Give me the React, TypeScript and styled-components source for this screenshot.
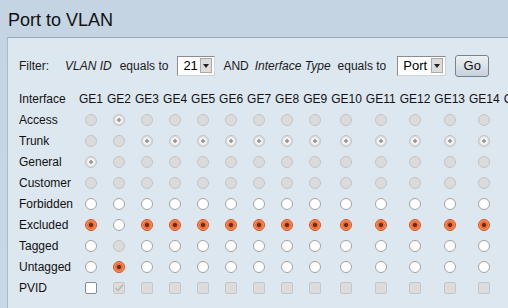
import styled, { createGlobalStyle, css } from 'styled-components';

const GlobalStyle = createGlobalStyle`
    html, body {
        margin: 0;
        padding: 0;
        width: 508px;
        height: 308px;
        overflow: hidden;
        background: #c6d6e5;
        font-family: 'Liberation Sans', Arial, sans-serif;
        color: #1a1a1a;
    }
`;

const Page = styled.div`
    width: 508px;
    height: 308px;
    box-sizing: border-box;
    padding: 9px 0 0 7px;
    background: linear-gradient(#c4d4e3, #c8d8e7);
    overflow: hidden;
`;

const Title = styled.h1`
    margin: 0 0 6px 1px;
    font-size: 18px;
    font-weight: normal;
    line-height: 22px;
    color: #111;
`;

const Panel = styled.div`
    width: 560px;
    height: 280px;
    box-sizing: border-box;
    padding: 17px 0 0 11px;
    background: #dde7f0;
    border-top: 1px solid #97a8b8;
    border-left: 1px solid #a9bacb;
`;

const FilterRow = styled.div`
    display: flex;
    align-items: center;
    height: 21px;
    font-size: 12px;
    white-space: nowrap;
`;

const Word = styled.span<{ $italic?: boolean; $gap: number }>`
    font-style: ${(p) => (p.$italic ? 'italic' : 'normal')};
    margin-right: ${(p) => p.$gap}px;
`;

const Select = styled.div<{ $width: number; $gap: number }>`
    display: flex;
    align-items: center;
    justify-content: space-between;
    box-sizing: border-box;
    width: ${(p) => p.$width}px;
    height: 20px;
    margin-right: ${(p) => p.$gap}px;
    padding: 0 2px 0 5px;
    background: #fff;
    border: 1px solid #8c8c8c;
    border-right-color: #d4d4d4;
    border-bottom-color: #d4d4d4;
    font-size: 13px;
    color: #000;
`;

const Arrow = styled.span`
    display: flex;
    align-items: center;
    justify-content: center;
    width: 12px;
    height: 15px;
    background: #dcdcdc;
    border: 1px solid #aaa;
    box-sizing: border-box;
    &::after {
        content: '';
        border-left: 3px solid transparent;
        border-right: 3px solid transparent;
        border-top: 4px solid #222;
    }
`;

const GoButton = styled.button`
    width: 34px;
    height: 22px;
    padding: 0;
    border: 1px solid #75838f;
    border-radius: 3px;
    background: linear-gradient(#edf1f5, #c6d1dc);
    font-family: inherit;
    font-size: 13px;
    color: #111;
`;

const Grid = styled.table`
    margin-top: 12px;
    border-collapse: collapse;
    font-size: 12px;
`;

const Cell = styled.td<{ $label?: boolean }>`
    height: 21px;
    padding: ${(p) => (p.$label ? '0' : '0 2px')};
    text-align: ${(p) => (p.$label ? 'left' : 'center')};
    width: ${(p) => (p.$label ? '58px' : 'auto')};
    min-width: ${(p) => (p.$label ? '58px' : '0')};
    max-width: ${(p) => (p.$label ? '58px' : 'none')};
    vertical-align: middle;
    white-space: nowrap;
    color: #111;
`;

const HeadCell = styled(Cell).attrs({ as: 'th' })`
    font-weight: normal;
`;

type Mark = 'off' | 'on' | 'doff' | 'don';

const Radio = styled.span<{ $mark: Mark }>`
    display: inline-block;
    box-sizing: border-box;
    width: 12px;
    height: 12px;
    border-radius: 50%;
    vertical-align: middle;
    ${(p) =>
        p.$mark === 'off' &&
        css`
            background: #fff;
            border: 1px solid #a3a3a3;
        `}
    ${(p) =>
        (p.$mark === 'doff' || p.$mark === 'don') &&
        css`
            background: #dbdbdb;
            border: 1px solid #c4c4c4;
        `}
    ${(p) =>
        p.$mark === 'don' &&
        css`
            background: radial-gradient(circle, #9a9a9a 0 1.5px, #f2f2f2 2px 3.5px, #dedede 4px);
        `}
    ${(p) =>
        p.$mark === 'on' &&
        css`
            background: radial-gradient(circle, #6e2a12 0 1.8px, #ec6a32 2.3px 3.5px, #f4915f 4px);
            border: 1px solid #c9572a;
        `}
`;

const Box = styled.span<{ $mark: Mark }>`
    display: inline-flex;
    align-items: center;
    justify-content: center;
    box-sizing: border-box;
    width: 12px;
    height: 12px;
    border-radius: 2px;
    vertical-align: middle;
    background: ${(p) => (p.$mark === 'off' ? '#fff' : '#dcdcdc')};
    border: 1px solid ${(p) => (p.$mark === 'off' ? '#8a8a8a' : '#c6c6c6')};
`;

const ports = Array.from({ length: 15 }, (_, i) => `GE${i + 1}`);

const rows: { name: string; kind: 'radio' | 'box'; marks: Mark[] }[] = [
    { name: 'Access', kind: 'radio', marks: ports.map((_, i) => (i === 1 ? 'don' : 'doff')) },
    { name: 'Trunk', kind: 'radio', marks: ports.map((_, i) => (i >= 2 ? 'don' : 'doff')) },
    { name: 'General', kind: 'radio', marks: ports.map((_, i) => (i === 0 ? 'don' : 'doff')) },
    { name: 'Customer', kind: 'radio', marks: ports.map(() => 'doff') },
    { name: 'Forbidden', kind: 'radio', marks: ports.map(() => 'off') },
    { name: 'Excluded', kind: 'radio', marks: ports.map((_, i) => (i === 1 ? 'off' : 'on')) },
    { name: 'Tagged', kind: 'radio', marks: ports.map((_, i) => (i === 1 ? 'doff' : 'off')) },
    { name: 'Untagged', kind: 'radio', marks: ports.map((_, i) => (i === 1 ? 'on' : 'off')) },
    { name: 'PVID', kind: 'box', marks: ports.map((_, i) => (i === 0 ? 'off' : i === 1 ? 'don' : 'doff')) },
];

const Check = () => (
    <svg width='10' height='10' viewBox='0 0 10 10'>
        <path d='M1.5 5 L4 7.5 L9 1.5' fill='none' stroke='#b8b8b8' strokeWidth='1.6' />
    </svg>
);

const App = () => (
    <Page>
        <GlobalStyle />
        <Title>Port to VLAN</Title>
        <Panel>
            <FilterRow>
                <Word $gap={16}>Filter:</Word>
                <Word $italic $gap={8}>
                    VLAN ID
                </Word>
                <Word $gap={9}>equals to</Word>
                <Select $width={38} $gap={8}>
                    21
                    <Arrow />
                </Select>
                <Word $gap={6}>AND</Word>
                <Word $italic $gap={7}>
                    Interface Type
                </Word>
                <Word $gap={11}>equals to</Word>
                <Select $width={49} $gap={9}>
                    Port
                    <Arrow />
                </Select>
                <GoButton>Go</GoButton>
            </FilterRow>
            <Grid>
                <thead>
                    <tr>
                        <HeadCell $label>Interface</HeadCell>
                        {ports.map((p) => (
                            <HeadCell key={p}>{p}</HeadCell>
                        ))}
                    </tr>
                </thead>
                <tbody>
                    {rows.map((r) => (
                        <tr key={r.name}>
                            <Cell $label>{r.name}</Cell>
                            {r.marks.map((m, i) => (
                                <Cell key={i}>
                                    {r.kind === 'radio' ? (
                                        <Radio $mark={m} />
                                    ) : (
                                        <Box $mark={m}>{m === 'don' && <Check />}</Box>
                                    )}
                                </Cell>
                            ))}
                        </tr>
                    ))}
                </tbody>
            </Grid>
        </Panel>
    </Page>
);

export default App;
